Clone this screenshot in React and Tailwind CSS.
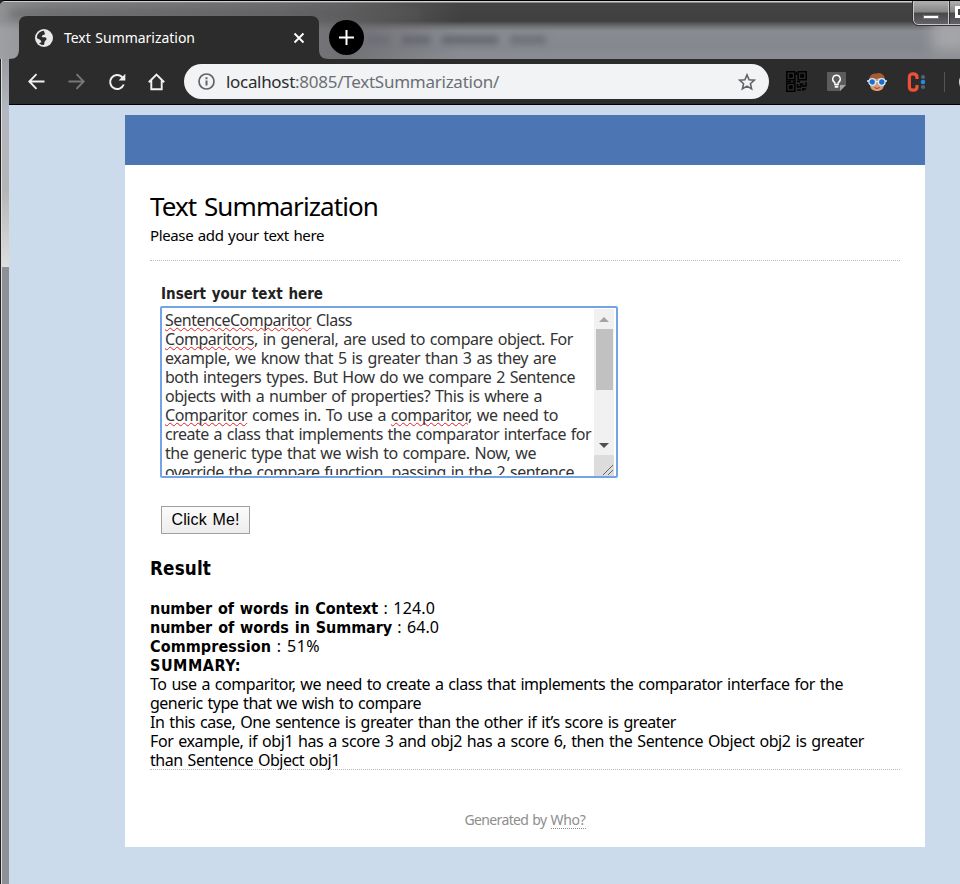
import { useLayoutEffect, useRef } from "react";

const UI = "font-['Noto_Sans',sans-serif]";
const BOLD = "font-['DejaVu_Sans_Condensed','DejaVu_Sans',sans-serif] font-bold [font-stretch:condensed]";

// Tracks a run of text so that it spans exactly `w` pixels.
function Fit({ w, className = "", children }) {
  const ref = useRef(null);
  useLayoutEffect(() => {
    const el = ref.current;
    el.style.letterSpacing = "0px";
    const natural = el.getBoundingClientRect().width;
    const track = (w - natural) / el.textContent.length;
    el.style.letterSpacing = `${track}px`;
  });
  return (
    <span ref={ref} className={`inline-block whitespace-pre [word-spacing:0.07em] ${className}`}>
      {children}
    </span>
  );
}

function Typo({ children }) {
  return (
    <span className="underline decoration-[#e02020] decoration-wavy decoration-[1px] underline-offset-[1px] [text-decoration-skip-ink:none]">
      {children}
    </span>
  );
}

const draft = [
  [187, <><Typo>SentenceComparitor</Typo> Class</>],
  [408, <><Typo>Comparitors</Typo>, in general, are used to compare object. For</>],
  [391, "example, we know that 5 is greater than 3 as they are"],
  [410, "both integers types. But How do we compare 2 Sentence"],
  [377, "objects with a number of properties? This is where a"],
  [393, <><Typo>Comparitor</Typo> comes in. To use a <Typo>comparitor</Typo>, we need to</>],
  [426, "create a class that implements the comparator interface for"],
  [371, "the generic type that we wish to compare. Now, we"],
  [409, "override the compare function, passing in the 2 sentence"],
];

const stats = [
  [228, "number of words in Context", 57, " : 124.0"],
  [242, "number of words in Summary", 47, " : 64.0"],
  [121, "Commpression", 49, " : 51%"],
];

const summary = [
  [693, "To use a comparitor, we need to create a class that implements the comparator interface for the"],
  [271, "generic type that we wish to compare"],
  [526, "In this case, One sentence is greater than the other if it’s score is greater"],
  [714, "For example, if obj1 has a score 3 and obj2 has a score 6, then the Sentence Object obj2 is greater"],
  [190, "than Sentence Object obj1"],
];

function TitleBar() {
  return (
    <div className="relative h-[59px] shrink-0 overflow-hidden rounded-tl-[5px] border-t border-black bg-[linear-gradient(to_bottom,#d0d0d0_0,#d0d0d0_1px,#444_2px,#404040_20px,#6c6d6f_25px,#898b91_30px,#85888f_46px,#8b8d93_58px)]">
      <div className="absolute inset-x-0 top-[2px] h-14 bg-[linear-gradient(to_right,#a4a5a8_0,#8e8f92_50px,#77777a_280px,#6a6a6c_340px,transparent_460px)] opacity-80" />
      <div className="absolute left-[10px] top-[8px] h-[10px] w-[410px] bg-[#58585a] opacity-50 blur-[4px]" />
      <div className="absolute left-[366px] top-[35px] flex gap-3 blur-[3px]">
        <span className="h-2 w-6 bg-[#6c6e76]" />
        <span className="h-2 w-7 bg-[#666870]" />
        <span className="h-2 w-14 bg-[#666870]" />
        <span className="h-2 w-9 bg-[#6e7078]" />
      </div>
      <div className="absolute -right-3 top-[18px] h-8 w-10 bg-[#a5a6a9] blur-[7px]" />
      <svg className="absolute left-0 top-0" width="340" height="59" viewBox="0 1 340 59">
        <path d="M9 60V59C16 59 19 56 19 49V24Q19 16 27 16H311Q319 16 319 24V49C319 56 322 59 329 59V60Z" fill="#2c2c2c" />
      </svg>
      <div className="absolute left-[19px] top-[15px] flex h-[44px] w-[300px] items-center pl-4 pr-[14px]">
        <svg width="18" height="18" viewBox="0 0 18 18">
          <circle cx="9" cy="9" r="9" fill="#e8e8e8" />
          <path d="M9.600 1.800C8 3 10.400 3.600 9.900 5 9.300 6.500 7 5.700 6.800 7.200c-.1.9.7 1 1.800 1 1.600 0 2.900.3 3 1.600.1 1.300-1.400 1.500-1.900 2.600-.4.9-.1 2.200-.8 3.700A7.200 7.200 0 0 1 4 14.200l2.300-.9c.1-1.600-.9-2.400-2.200-3.100-.9-.5-1.900-.9-2.300-1.500A7.300 7.300 0 0 1 9.600 1.800Z" fill="#2c2c2c" />
        </svg>
        <Fit w={131} className={`${UI} ml-[11px] text-[14px] leading-5 text-white`}>Text Summarization</Fit>
        <svg className="ml-auto" width="12" height="12" viewBox="0 0 12 12" stroke="#fff" strokeWidth="1.900">
          <path d="M1.500 1.500 10.500 10.500M10.500 1.500 1.500 10.500" />
        </svg>
      </div>
      <div className="absolute left-[329px] top-[19px] flex size-[35px] items-center justify-center rounded-full bg-black">
        <svg width="15" height="15" viewBox="0 0 15 15" stroke="#fff" strokeWidth="2">
          <path d="M7.500 0V15M0 7.500H15" />
        </svg>
      </div>
      <div className="absolute -top-px left-[913px] flex h-[25px] w-[60px] rounded-bl-[5px] border border-[#c8c8c8] bg-[linear-gradient(to_bottom,#b0b0b0_0,#858585_11px,#48484a_12px,#66666a_24px)] outline outline-1 outline-[#333]">
        <div className="flex w-[35px] justify-center border-r border-[#c8c8c8] pt-[14px]">
          <span className="h-[4px] w-[16px] border border-[#777] bg-white" />
        </div>
        <div className="border-l border-[#333] pl-[5px] pt-[5px]">
          <span className="block size-3 border-[3px] border-white bg-[#444]" />
        </div>
      </div>
    </div>
  );
}

function Toolbar() {
  return (
    <div className="flex h-[46px] shrink-0 items-center overflow-hidden border-b border-black bg-[#2c2c2c] pl-[19px]">
      <svg className="shrink-0" width="17" height="17" viewBox="0 0 17 17" fill="none" stroke="#f0f0f0" strokeWidth="1.900">
        <path d="M16.500 8.500H1.500M8.500 1.200 1.300 8.500 8.500 15.800" />
      </svg>
      <svg className="ml-[23px] shrink-0" width="17" height="17" viewBox="0 0 17 17" fill="none" stroke="#777" strokeWidth="1.900">
        <path d="M.5 8.500H15.500M8.500 1.200 15.700 8.500 8.500 15.800" />
      </svg>
      <svg className="ml-[23px] shrink-0" width="18" height="18" viewBox="0 0 18 18" fill="none" stroke="#f0f0f0" strokeWidth="2">
        <path d="M15.700 11.500A7 7 0 1 1 14 4L15.500 5.500" />
        <path d="M17.300.8V7.500H10.600Z" fill="#f0f0f0" stroke="none" />
      </svg>
      <svg className="ml-[22px] shrink-0" width="17" height="18" viewBox="0 0 17 18" fill="none" stroke="#f0f0f0" strokeWidth="1.900">
        <path d="M.8 9.200 8.500 1.600 16.200 9.200M3.300 7.500V16.300H13.700V7.500" />
      </svg>
      <div className="ml-[19px] flex h-[35px] w-[585px] shrink-0 items-center rounded-full bg-[#f1f3f4] pl-[14px] pr-[13px]">
        <svg width="17" height="17" viewBox="0 0 17 17" fill="none" stroke="#5f6368" strokeWidth="1.700">
          <circle cx="8.500" cy="8.500" r="7.500" />
          <path d="M8.500 7.500V12.500M8.500 4.300V6.200" strokeWidth="2" />
        </svg>
        <span className={`${UI} ml-[11px] flex text-[17px] leading-6`}>
          <Fit w={69} className="text-[#2b2d30]">localhost</Fit>
          <Fit w={204} className="text-[#6b6f74]">:8085/TextSummarization/</Fit>
        </span>
        <svg className="ml-auto" width="18" height="18" viewBox="0 0 18 18" fill="none" stroke="#5f6368" strokeWidth="1.600">
          <path d="M9 1.900 11.100 6.800 16.400 7.200 12.400 10.700 13.600 15.900 9 13.100 4.400 15.900 5.600 10.700 1.600 7.200 6.900 6.800Z" />
        </svg>
      </div>
      <svg className="ml-[17px] shrink-0" width="21" height="21" viewBox="0 0 21 21" fill="none" stroke="#000" strokeWidth="1.500">
        <path d="M.8.8h8v8h-8zM12.200.8h8v8h-8zM.8 12.200h8v8h-8z" />
        <path d="M3.300 3.300h3v3h-3zM14.700 3.300h3v3h-3zM3.300 14.700h3v3h-3z" fill="#000" strokeWidth="1" />
        <path d="M11 10.500h3M10.500 1v3M11.500 13v3h3v-3h2v2h3.500v-4M11 19h4M17 18h3M17 20v-3M0 10.500h5M7 10.500h3" />
      </svg>
      <svg className="ml-5 shrink-0" width="19" height="19" viewBox="0 0 19 19">
        <path d="M1 0H18Q19 0 19 1V13L13 19H1Q0 19 0 18V1Q0 0 1 0Z" fill="#5c5c5c" />
        <path d="M13 19V13H19Z" fill="#a5a5a5" />
        <g fill="none" stroke="#fff" strokeWidth="1.400">
          <path d="M7.900 12.500V10.800C4 8.300 5.700 3.300 9.500 3.300S15 8.300 11.100 10.800V12.500Z" />
          <path d="M7.700 14.700H11.300" strokeWidth="2" />
        </g>
      </svg>
      <svg className="ml-[21px] shrink-0" width="20" height="20" viewBox="0 0 20 20">
        <path d="M3 8C3 0 17 0 17 8V12C17 17 14 19 10 19S3 17 3 12Z" fill="#d99c78" />
        <path d="M2.500 9C1.500 4 5 1 9 1.500L12 1C16.500 1.500 18.500 5 17.500 9L14 6 7 7.500Z" fill="#a45c32" />
        <path d="M7.500 15.500Q10 17.500 12.500 15.500" stroke="#a33" fill="none" />
        <g fill="#1d6ccb" stroke="#d4ecff" strokeWidth="1.300">
          <circle cx="5.200" cy="10" r="3.300" /><circle cx="14.800" cy="10" r="3.300" />
          <path d="M8.600 9.700H11.400M0 9H2M18 9H20" />
        </g>
      </svg>
      <svg className="ml-[20px] shrink-0" width="20" height="20" viewBox="0 0 20 20">
        <path d="M10 7V5Q10 1.800 6.200 1.800T2.400 5V15Q2.400 18.200 6.200 18.200T10 15V13" fill="none" stroke="#f05135" strokeWidth="3.200" />
        <circle cx="16" cy="5" r="2.100" fill="#4d657c" /><circle cx="16" cy="10" r="2.300" fill="#2988dc" /><circle cx="16" cy="15" r="2.100" fill="#4d657c" />
      </svg>
      <span className="ml-[17px] h-5 w-px shrink-0 bg-[#555]" />
      <span className="ml-[14px] size-5 shrink-0 rounded-full bg-[#d8d8d8]" />
    </div>
  );
}

function TextBox() {
  return (
    <div className="-ml-[2px] mt-[2px] flex h-[172px] w-[458px] rounded-[2px] border-2 border-[#75a3e8] bg-white p-[2px]">
      <div className={`${UI} h-[165px] grow overflow-hidden pl-px pt-[1px] text-[16px] leading-[19px] text-[#333]`}>
        {draft.map(([w, text], i) => (
          <div key={i} className="flex h-[19px]"><Fit w={w}>{text}</Fit></div>
        ))}
      </div>
      <div className="-mt-px flex h-[167px] w-[20px] shrink-0 flex-col bg-[#f1f1f1]">
        <div className="flex h-[20px] items-center justify-center">
          <svg width="10" height="5"><path d="M0 5 5 0 10 5Z" fill="#a3a3a3" /></svg>
        </div>
        <div className="mx-auto h-[61px] w-[17px] bg-[#c1c1c1]" />
        <div className="mt-auto flex h-[20px] items-center justify-center">
          <svg width="10" height="5"><path d="M0 0H10L5 5Z" fill="#505050" /></svg>
        </div>
        <div className="flex h-[21px] items-end justify-end bg-[#dcdcdc]">
          <svg width="12" height="12" stroke="#666" strokeWidth="1"><path d="M1 11 11 1M6 11 11 6" /></svg>
        </div>
      </div>
    </div>
  );
}

export default function App() {
  return (
    <div className="relative flex h-[884px] w-[960px] flex-col overflow-hidden bg-[#222]">
      <TitleBar />
      <div className="flex grow">
        <div className="flex w-[9px] shrink-0 flex-col border-l border-[#222]">
          <div className="h-[208px] border-l border-[#ddd] bg-[linear-gradient(to_bottom,#9a9ba0,#b3b7bf_50px,#b5b5b5_130px,#dedede)]" />
          <div className="grow border-l border-[#ddd] bg-[#8d9097]" />
        </div>
        <div className="flex w-[951px] flex-col">
          <Toolbar />
          <div className="grow bg-[#ccdbeb] pl-[116px] pt-[10px]">
            <div className="h-[732px] w-[800px] bg-white">
              <div className="h-[50px] bg-[#4b75b3]" />
              <div className={`${UI} flex flex-col px-[25px] pt-[25px] text-black`}>
                <h2 className="h-[33px] text-[26px] leading-[33px]"><Fit w={228}>Text Summarization</Fit></h2>
                <p className="mt-[2px] h-[20px] text-[15px] leading-5"><Fit w={174}>Please add your text here</Fit></p>
                <div className="mt-[15px] border-t border-dotted border-[#bbb]" />
                <div className="flex flex-col items-start pl-3 pt-[23px]">
                  <label className={`${BOLD} -ml-px h-[20px] text-[15px] leading-5 text-[#222]`}><Fit w={162}>Insert your text here</Fit></label>
                  <TextBox />
                  <button className="-ml-px mt-[28px] flex h-[28px] w-[89px] items-center justify-center border border-[#a0a0a0] bg-[linear-gradient(to_bottom,#fbfbfb,#ededed)] pb-[1px] font-['Liberation_Sans',sans-serif] text-[16px] text-black">
                    <Fit w={68}>Click Me!</Fit>
                  </button>
                </div>
                <h3 className={`${BOLD} mt-[23px] h-[23px] text-[18.700px] leading-[23px]`}><Fit w={61}>Result</Fit></h3>
                <div className="mt-[19px] h-[170px] text-[16px] leading-[19px]">
                  {stats.map(([bw, label, w, value]) => (
                    <div key={label} className="flex h-[19px]">
                      <Fit w={bw} className={BOLD}>{label}</Fit>
                      <Fit w={w}>{value}</Fit>
                    </div>
                  ))}
                  <div className={`${BOLD} flex h-[19px]`}><Fit w={91}>SUMMARY:</Fit></div>
                  {summary.map(([w, text]) => (
                    <div key={text} className="flex h-[19px]"><Fit w={w}>{text}</Fit></div>
                  ))}
                </div>
                <div className="border-t border-dotted border-[#bbb]" />
                <footer className="mt-[41px] flex justify-center text-[14px] leading-[18px] text-[#8e8e8e]">
                  <Fit w={86}>{"Generated by "}</Fit>
                  <a className="h-[18px] border-b border-dotted border-[#8e8e8e]"><Fit w={35}>Who?</Fit></a>
                </footer>
              </div>
            </div>
          </div>
        </div>
      </div>
    </div>
  );
}
